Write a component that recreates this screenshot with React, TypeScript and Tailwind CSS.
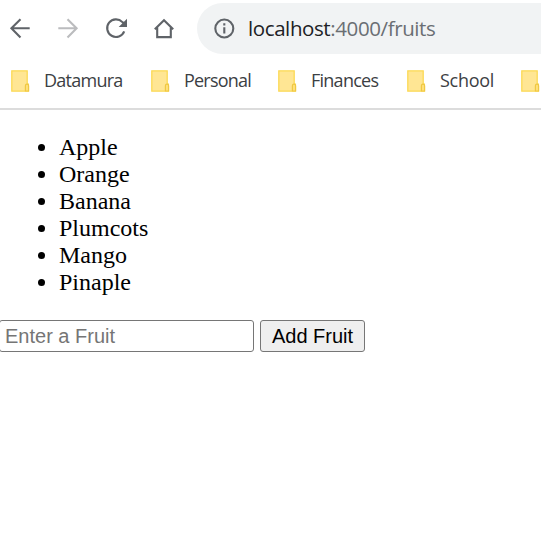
import React from "react";

const bookmarks = [
  { name: "Datamura", box: "w-[140px]", text: "tracking-[-0.75px]" },
  { name: "Personal", box: "w-[127px]", text: "tracking-[-0.8px]" },
  { name: "Finances", box: "w-[129px]", text: "tracking-[-0.75px]" },
  { name: "School", box: "w-[114px]", text: "tracking-[-0.3px]" },
  { name: "", box: "w-[60px]", text: "" },
];

const fruits = ["Apple", "Orange", "Banana", "Plumcots", "Mango", "Pinaple"];

function Folder() {
  return (
    <svg className="shrink-0" width="19" height="22" viewBox="0 0 19 22">
      <path d="M.8.8h15.4v13.4h1.2v7H.8z" fill="#ffe694" stroke="#fcd955" strokeWidth="1.3" />
      <path d="M14.4 21v-5.2q0-1.6 1.6-1.6t1.6 1.6V21z" fill="#ffe07a" stroke="#efc843" strokeWidth="1.2" />
    </svg>
  );
}

function Toolbar() {
  return (
    <div className="flex h-[57px] pt-[3px]">
      <svg className="h-[51px] w-[197px] shrink-0" viewBox="0 3 197 51" fill="none" stroke="#5f6368" strokeWidth="2.1">
        <path d="M29.7 28.3H11.5M20.5 19.2l-9.1 9.1 9.1 9.1" />
        <path d="M58.3 28.3h18.2M67.5 19.2l9.1 9.1-9.1 9.1" stroke="#bbbcbe" />
        <path d="M124.2 31.3a8.8 8.8 0 1 1-1.8-9.2l2 2" />
        <path d="M127 18.8v8.3h-8.3z" fill="#5f6368" stroke="none" />
        <path d="M154.8 29.2l9.2-8.9 9.2 8.9M157.2 27v10.1h13.6V27" />
      </svg>
      <div className="flex h-[51px] flex-1 items-center rounded-l-full bg-[#f1f3f4] pl-[17px]">
        <svg className="shrink-0" width="21" height="21" viewBox="0 0 21 21" fill="none" stroke="#5f6368" strokeWidth="2.1">
          <circle cx="10.3" cy="10.5" r="9" />
          <path d="M10.3 9.3v6.2M10.3 5.3v2.2" />
        </svg>
        <span className="ml-[13px] whitespace-nowrap pb-[2px] font-['Open_Sans',sans-serif] text-[20.5px] leading-[28px] tracking-[-0.4px] text-[#202124]">
          localhost<span className="text-[#6a6e73]">:4000/fruits</span>
        </span>
      </div>
    </div>
  );
}

export default function App() {
  return (
    <div className="h-[533px] w-[541px] overflow-hidden bg-white">
      <Toolbar />
      <div className="flex h-[53px] overflow-hidden border-b-2 border-[#dcdcdc] pl-[11px] pt-[13px]">
        {bookmarks.map((b, i) => (
          <div key={i} className={`flex h-[22px] shrink-0 items-center ${b.box}`}>
            <Folder />
            <span className={`ml-[14px] whitespace-nowrap pb-[2px] font-['Open_Sans',sans-serif] text-[18px] leading-[22px] text-[#3c4043] ${b.text}`}>
              {b.name}
            </span>
          </div>
        ))}
      </div>
      <ul className="mt-[24px] list-disc pl-[59px] font-['Liberation_Serif',serif] text-[24px] leading-[27px] text-black">
        {fruits.map((f) => (
          <li key={f}>{f}</li>
        ))}
      </ul>
      <form className="mt-[24px] flex gap-[6px] font-['Liberation_Sans',sans-serif] text-[20px]" onSubmit={(e) => e.preventDefault()}>
        <input
          className="-ml-px h-[32px] w-[255px] rounded-[3px] border border-[#767676] bg-white px-[5px] placeholder:text-[#757575]"
          placeholder="Enter a Fruit"
        />
        <button className="h-[32px] w-[105px] whitespace-nowrap rounded-[3px] border border-[#767676] bg-[#efefef] text-black">Add Fruit</button>
      </form>
    </div>
  );
}
